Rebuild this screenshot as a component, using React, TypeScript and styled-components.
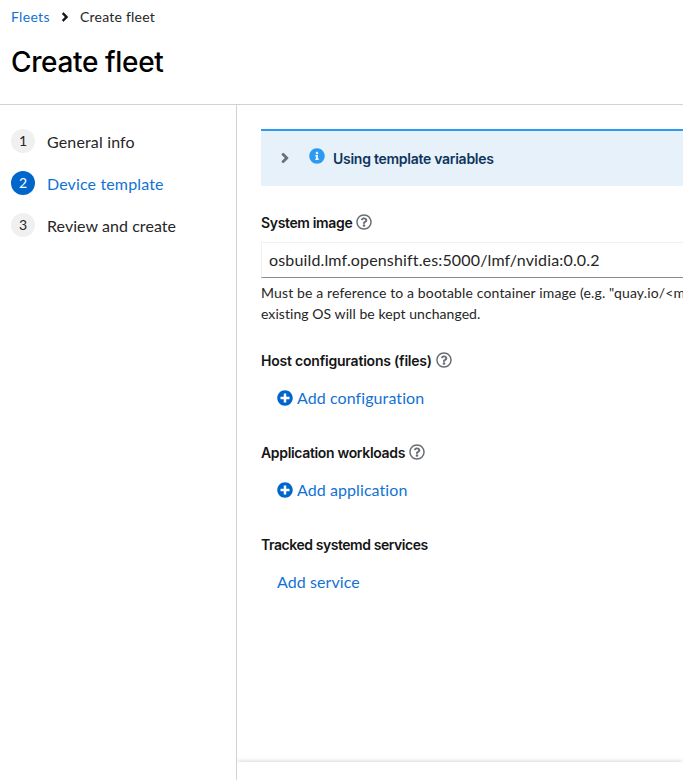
import React from 'react';
import styled, { createGlobalStyle } from 'styled-components';
import { FaAngleRight, FaInfoCircle, FaPlusCircle, FaRegQuestionCircle } from 'react-icons/fa';

const GlobalStyle = createGlobalStyle`
  * { box-sizing: border-box; }
  html, body { margin: 0; padding: 0; overflow: hidden; background: #fff; }
  body { font-family: Lato, "Liberation Sans", sans-serif; font-size: 16px; color: #262626; }
  h1, p, ol { margin: 0; padding: 0; }
`;

const heading = '"Inter", "Liberation Sans", sans-serif';
const linkText = '#1272d4';

const Page = styled.div`
  display: flex;
  flex-direction: column;
  width: 100%;
  height: 780px;
`;

const Header = styled.header`
  flex: none;
  height: 105px;
  padding: 6px 11px 0;
  border-bottom: 1px solid #d2d2d2;
`;

const Breadcrumb = styled.nav`
  display: flex;
  align-items: center;
  height: 21px;
  font-size: 14px;
  letter-spacing: 0.22px;
`;

const BreadcrumbLink = styled.a`
  width: 39px;
  color: ${linkText};
  letter-spacing: 0.32px;
`;

const Separator = styled(FaAngleRight)`
  width: 14px;
  height: 14px;
  margin: 0 8px;
  color: #151515;
  path { stroke: currentColor; stroke-width: 12; }
`;

const Title = styled.h1`
  margin-top: 17px;
  font: 500 28px/36px ${heading};
  letter-spacing: -0.36px;
  color: #000;
`;

const Wizard = styled.div`
  display: flex;
  flex: 1;
  min-height: 0;
`;

const Steps = styled.ol`
  display: flex;
  flex: none;
  flex-direction: column;
  gap: 18px;
  width: 237px;
  padding: 24px 11px;
  border-right: 1px solid #d2d2d2;
  list-style: none;
`;

const Step = styled.li<{ $active?: boolean; $spacing: number }>`
  display: flex;
  gap: 12px;
  height: 24px;
  line-height: 26px;
  letter-spacing: ${(p) => p.$spacing}px;
  color: ${(p) => (p.$active ? linkText : '#262626')};
`;

const StepNumber = styled.span<{ $active?: boolean }>`
  flex: none;
  width: 24px;
  height: 24px;
  border-radius: 50%;
  background: ${(p) => (p.$active ? '#06c' : '#f0f0f0')};
  color: ${(p) => (p.$active ? '#fff' : '#262626')};
  font-size: 14px;
  line-height: 24px;
  letter-spacing: 0;
  text-align: center;
`;

const Main = styled.main`
  display: flex;
  flex: 1;
  flex-direction: column;
  min-width: 0;
  overflow: hidden;
`;

const Form = styled.div`
  flex: 1;
  min-height: 0;
  padding: 24px 0 0 24px;
`;

const Alert = styled.div`
  display: flex;
  align-items: center;
  height: 57px;
  padding: 0 0 2px 16px;
  border-top: 2px solid #2b9af3;
  background: #e7f1fa;
`;

const AlertToggle = styled(FaAngleRight)`
  width: 16px;
  height: 16px;
  margin-right: 16px;
  color: #6a6e73;
  path { stroke: currentColor; stroke-width: 12; }
`;

const AlertIcon = styled(FaInfoCircle)`
  width: 16px;
  height: 16px;
  margin: 0 8px 3px 0;
  color: #2b9af3;
`;

const AlertTitle = styled.span`
  padding-top: 1px;
  font: 600 14px/21px ${heading};
  letter-spacing: -0.27px;
  color: #0d355d;
`;

const Field = styled.section<{ $gap: number }>`
  padding-top: ${(p) => p.$gap}px;
`;

const Label = styled.div<{ $spacing: number }>`
  display: flex;
  align-items: center;
  gap: 4px;
  height: 21px;
  font: 600 14px/21px ${heading};
  letter-spacing: ${(p) => p.$spacing}px;
  color: #151515;
  white-space: nowrap;
`;

const Help = styled(FaRegQuestionCircle)`
  width: 16px;
  height: 16px;
  margin-bottom: 2px;
  color: #6a6e73;
`;

const TextInput = styled.input`
  display: block;
  width: 700px;
  height: 36px;
  margin-top: 9px;
  padding: 0 8px 2px 7px;
  border: 1px solid #f0f0f0;
  border-bottom-color: #8a8d90;
  border-radius: 0;
  outline: 0;
  background: #fff;
  color: #262626;
  font: inherit;
  letter-spacing: 0.15px;
`;

const HelperText = styled.p`
  margin-top: 4px;
  font-size: 14px;
  line-height: 21px;
  white-space: nowrap;
`;

const HelperLine = styled.span<{ $spacing: number }>`
  display: block;
  letter-spacing: ${(p) => p.$spacing}px;
`;

const LinkButton = styled.button`
  display: flex;
  align-items: center;
  gap: 4px;
  height: 36px;
  margin-top: 9px;
  padding: 0 16px;
  border: 0;
  background: none;
  color: ${linkText};
  font: inherit;
  line-height: 24px;
  letter-spacing: 0.08px;
`;

const PlusIcon = styled(FaPlusCircle)`
  width: 16px;
  height: 16px;
  color: #06c;
`;

const Footer = styled.footer`
  flex: none;
  height: 18px;
  background: #fff;
  box-shadow: 0 -2px 4px -1px rgba(3, 3, 3, 0.16);
`;

const steps = [
  { label: 'General info', spacing: 0.15 },
  { label: 'Device template', spacing: 0.14, active: true },
  { label: 'Review and create', spacing: 0.06 },
];

const listFields = [
  { label: 'Host configurations (files)', spacing: -0.21, gap: 26, help: true, action: 'Add configuration', icon: true },
  { label: 'Application workloads', spacing: -0.34, gap: 26, help: true, action: 'Add application', icon: true },
  { label: 'Tracked systemd services', spacing: -0.45, gap: 26, help: false, action: 'Add service', icon: false },
];

export default function App() {
  return (
    <Page>
      <GlobalStyle />
      <Header>
        <Breadcrumb>
          <BreadcrumbLink>Fleets</BreadcrumbLink>
          <Separator />
          Create fleet
        </Breadcrumb>
        <Title>Create fleet</Title>
      </Header>
      <Wizard>
        <Steps>
          {steps.map((step, i) => (
            <Step key={step.label} $active={step.active} $spacing={step.spacing}>
              <StepNumber $active={step.active}>{i + 1}</StepNumber>
              {step.label}
            </Step>
          ))}
        </Steps>
        <Main>
          <Form>
            <Alert>
              <AlertToggle />
              <AlertIcon />
              <AlertTitle>Using template variables</AlertTitle>
            </Alert>
            <Field $gap={26}>
              <Label $spacing={-0.35}>
                System image
                <Help />
              </Label>
              <TextInput readOnly value="osbuild.lmf.openshift.es:5000/lmf/nvidia:0.0.2" />
              <HelperText>
                <HelperLine $spacing={0.135}>
                  Must be a reference to a bootable container image (e.g. "quay.io/&lt;m
                </HelperLine>
                <HelperLine $spacing={0.06}>existing OS will be kept unchanged.</HelperLine>
              </HelperText>
            </Field>
            {listFields.map((field) => (
              <Field key={field.label} $gap={field.gap}>
                <Label $spacing={field.spacing}>
                  {field.label}
                  {field.help && <Help />}
                </Label>
                <LinkButton>
                  {field.icon && <PlusIcon />}
                  {field.action}
                </LinkButton>
              </Field>
            ))}
          </Form>
          <Footer />
        </Main>
      </Wizard>
    </Page>
  );
}
